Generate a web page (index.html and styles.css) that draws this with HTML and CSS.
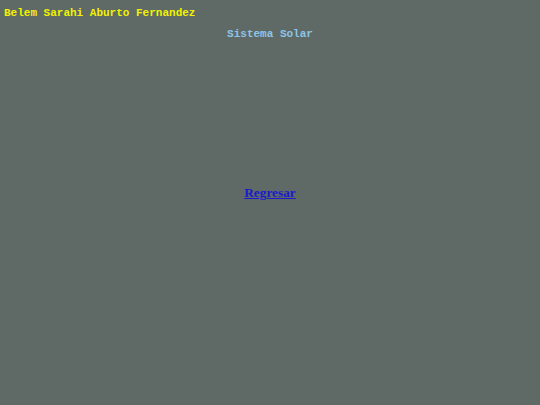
FILE: index.html
```html
<!DOCTYPE html>
<html>
<head>
<meta charset="utf-8">
<link rel="stylesheet" href="styles.css">
</head>
<body>
<div class="autor">Belem Sarahi Aburto Fernandez</div>
<div class="titulo">Sistema Solar</div>
<div class="centro"><a class="regresar" href="#">Regresar</a></div>
</body>
</html>
```

FILE: styles.css
```css
html, body {
  margin: 0;
  padding: 0;
  background: #5f6a66;
  height: 100%;
}
body {
  padding: 7px 4px 0 4px;
  box-sizing: border-box;
}
.autor {
  font-family: "Liberation Mono", monospace;
  font-weight: bold;
  font-size: 11px;
  line-height: 13px;
  color: #f2f200;
}
.titulo {
  font-family: "Liberation Mono", monospace;
  font-weight: bold;
  font-size: 11px;
  line-height: 13px;
  color: #8ec4e8;
  text-align: center;
  margin-top: 8px;
}
.centro {
  text-align: center;
  margin-top: 144px;
  font-family: "Liberation Serif", serif;
  font-size: 13.33px;
  font-weight: bold;
}
.regresar {
  color: #1a1acc;
}
```
